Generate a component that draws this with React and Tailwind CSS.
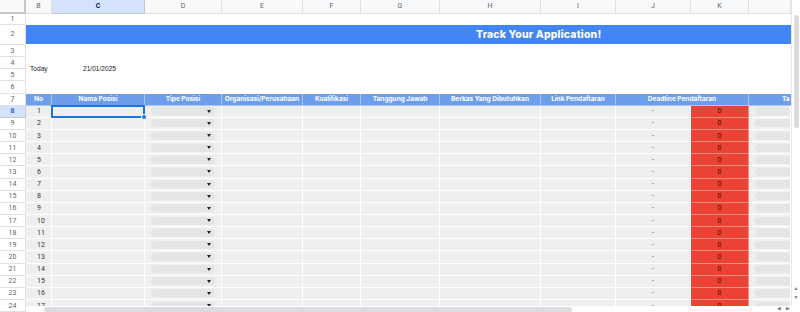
import React from 'react';

const GRID = 'grid grid-cols-[26px_26px_93px_77px_81px_58px_79px_101px_75px_75px_58px_42px]';
const LETTERS = ['B', 'C', 'D', 'E', 'F', 'G', 'H', 'I', 'J', 'K', ''];
const HEADERS = [
    'No', 'Nama Posisi', 'Tipe Posisi', 'Organisasi/Perusahaan', 'Kualifikasi',
    'Tanggung Jawab', 'Berkas Yang Dibutuhkan', 'Link Pendaftaran',
];

const RowHead = ({ n, active }) => (
    <div
        className={
            active
                ? 'flex items-center justify-center pt-px leading-none bg-[#d3e3fd] border-r border-b border-[#c7c7c7] text-[7px] font-semibold text-[#0b57d0]'
                : 'flex items-center justify-center pt-px leading-none bg-white border-r border-b border-[#e1e1e1] text-[7px] text-[#5f6368]'
        }
    >
        {n}
    </div>
);

const Caret = () => (
    <svg width="4" height="3" viewBox="0 0 4 3" className="shrink-0">
        <path d="M0 0h4L2 3z" fill="#202124" />
    </svg>
);

const Chip = ({ caret }) => (
    <div className="h-[8px] w-full rounded-full bg-[#e4e5e6] flex items-center justify-end pr-[4px]">
        {caret && <Caret />}
    </div>
);

const DataRow = ({ row, no }) => {
    const cell = 'bg-[#efefef] border-r border-b border-white leading-none';
    const selected = row === 8;
    return (
        <div className={`${GRID} grid-rows-[12.15px] h-[12.15px]`}>
            <RowHead n={row} active={selected} />
            <div className={`${cell} flex items-center pt-px pl-[11px] text-[7px] text-[#333]`}>{no}</div>
            <div className={`${cell} relative`}>
                {selected && (
                    <>
                        <div className="absolute -inset-px border-2 border-[#1a73e8]" />
                        <div className="absolute -right-[3px] -bottom-[3px] w-[6px] h-[6px] rounded-full bg-[#1a73e8] border border-white z-10" />
                    </>
                )}
            </div>
            <div className={`${cell} flex items-center px-[6px]`}>
                <Chip caret />
            </div>
            <div className={cell} />
            <div className={cell} />
            <div className={cell} />
            <div className={cell} />
            <div className={cell} />
            <div className={`${cell} flex items-center justify-center pt-px text-[7px] text-[#555]`}>-</div>
            <div className="bg-[#ea4335] border-r border-b border-[#f28b82] leading-none flex items-center justify-center pt-px text-[7px] text-[#3d0c08]">
                0
            </div>
            <div className={`${cell} flex items-center pl-[6px] overflow-hidden`}>
                <div className="h-[8px] w-[60px] shrink-0 rounded-full bg-[#e4e5e6]" />
            </div>
        </div>
    );
};

export default function App() {
    const rows = Array.from({ length: 17 }, (_, i) => i + 8);

    return (
        <div
            className="relative w-[800px] h-[312px] overflow-hidden bg-white flex"
            style={{ fontFamily: 'Roboto, "Liberation Sans", Arial, sans-serif' }}
        >
            <div className="w-[791px] flex flex-col">
                {/* column letters */}
                <div className={`${GRID} h-[14px]`}>
                    <div className="bg-[#f8f9fa] border-r-2 border-b-2 border-[#c4c7c5]" />
                    {LETTERS.map((l, i) => (
                        <div
                            key={i}
                            className={
                                l === 'C'
                                    ? 'flex items-center justify-center leading-none bg-[#d3e3fd] border-r border-b border-[#c7c7c7] text-[7px] font-bold text-[#041e49]'
                                    : 'flex items-center justify-center leading-none bg-[#f8f9fa] border-r border-b border-[#e1e1e1] text-[7px] text-[#5f6368]'
                            }
                        >
                            {l}
                        </div>
                    ))}
                </div>

                {/* row 1 */}
                <div className={`${GRID} grid-rows-[10.5px] h-[10.5px]`}>
                    <RowHead n={1} />
                    <div className="col-span-11 bg-white" />
                </div>

                {/* row 2 banner */}
                <div className={`${GRID} grid-rows-[20.5px] h-[20.5px]`}>
                    <RowHead n={2} />
                    <div className="col-span-11 bg-[#4285f4] border-b border-white flex items-center pt-[2px] pl-[450px] leading-none">
                        <span
                            className="text-[10.4px] font-extrabold text-white whitespace-nowrap tracking-[0.2px]"
                            style={{ fontFamily: 'Inter, "Open Sans", sans-serif' }}
                        >
                            Track Your Application!
                        </span>
                    </div>
                </div>

                {/* rows 3-6 */}
                <div className={`${GRID} grid-rows-[12.15px_12.15px_12.15px_12.15px]`}>
                    {[3, 4, 5, 6].map((n) => (
                        <div key={n} className="col-start-1 grid">
                            <RowHead n={n} />
                        </div>
                    ))}
                    <div
                        className="col-start-2 col-span-11 row-start-1 row-span-4 bg-white grid grid-cols-[26px_93px_1fr] items-center text-[6.6px] text-[#222]"
                        style={{ fontFamily: '"Liberation Sans", Arial, sans-serif' }}
                    >
                        <span className="pl-[4px]">Today</span>
                        <span className="pl-[31px]">21/01/2025</span>
                        <span />
                    </div>
                </div>

                {/* row 7 headers */}
                <div
                    className={`${GRID} grid-rows-[12.15px] h-[12.15px]`}
                    style={{ fontFamily: 'Inter, "Open Sans", sans-serif' }}
                >
                    <RowHead n={7} />
                    {HEADERS.map((h) => (
                        <div
                            key={h}
                            className="bg-[#6d9eeb] border-r border-b border-[#a9c5f2] leading-none flex items-center justify-center pt-px text-[6.5px] font-bold text-white whitespace-nowrap overflow-hidden"
                        >
                            {h}
                        </div>
                    ))}
                    <div className="col-span-2 bg-[#6d9eeb] border-r border-b border-[#a9c5f2] leading-none flex items-center justify-center pt-px text-[6.5px] font-bold text-white whitespace-nowrap">
                        Deadline Pendaftaran
                    </div>
                    <div className="bg-[#6d9eeb] border-b border-[#a9c5f2] leading-none overflow-hidden flex items-center pt-px">
                        <span className="pl-[33px] text-[6.5px] font-bold text-white whitespace-nowrap">Ta</span>
                    </div>
                </div>

                {rows.map((r, i) => (
                    <DataRow key={r} row={r} no={i + 1} />
                ))}
            </div>

            {/* vertical scrollbar */}
            <div className="w-[9px] bg-white border-l border-[#e8e8e8] flex flex-col items-center pt-[15px]">
                <div className="w-[5px] h-[113px] rounded-full bg-[#dadce0]" />
                <div className="flex-1" />
                <div className="flex flex-col items-center gap-[3px] pb-[12px] text-[5px] leading-[6px] text-[#777]">
                    <span>▲</span>
                    <span>▼</span>
                </div>
            </div>

            {/* horizontal scrollbar */}
            <div className="absolute left-[26px] right-0 bottom-0 h-[6px] bg-white flex items-center">
                <div className="ml-[18px] w-[528px] h-[5px] rounded-full bg-[#dadce0]" />
                <div className="flex-1" />
                <div className="flex items-center gap-[5px] pr-[10px] text-[5px] text-[#777]">
                    <span>◀</span>
                    <span>▶</span>
                </div>
            </div>
        </div>
    );
}
